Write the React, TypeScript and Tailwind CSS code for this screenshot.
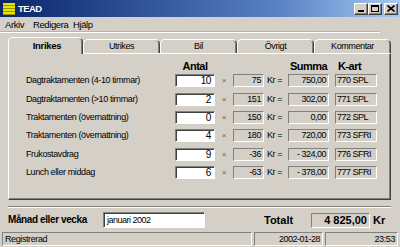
import React from "react";

const rows = [
  { label: "Dagtraktamenten (4-10 timmar)", antal: "10", pris: "75", summa: "750,00", kart: "770 SPL", h: "h-[19px]" },
  { label: "Dagtraktamenten (>10 timmar)", antal: "2", pris: "151", summa: "302,00", kart: "771 SPL", h: "h-[18px]" },
  { label: "Traktamenten (övernattning)", antal: "0", pris: "150", summa: "0,00", kart: "772 SPL", h: "h-[18px]" },
  { label: "Traktamenten (övernattning)", antal: "4", pris: "180", summa: "720,00", kart: "773 SFRI", h: "h-[19px]" },
  { label: "Frukostavdrag", antal: "9", pris: "-36", summa: "- 324,00", kart: "776 SFRI", h: "h-[18px]" },
  { label: "Lunch eller middag", antal: "6", pris: "-63", summa: "- 378,00", kart: "777 SFRI", h: "h-[18px]" },
];

const font = "font-['Liberation_Sans',Arial,sans-serif]";

function WinBtn({ children }: { children: React.ReactNode }) {
  return (
    <div className="w-[14px] h-[12px] bg-[#d4d0c8] border border-t-white border-l-white border-r-[#404040] border-b-[#404040] shadow-[inset_-1px_-1px_0_#808080] flex items-center justify-center">
      {children}
    </div>
  );
}

const sunken = "border border-t-[#808080] border-l-[#808080] border-r-white border-b-white";

export default function App() {
  return (
    <div className={`w-[400px] h-[247px] bg-[#d4d0c8] flex flex-col overflow-hidden text-black ${font} text-[9px] tracking-[-0.4px] leading-none`}>
      {/* Title bar */}
      <div className="h-[17px] shrink-0 flex items-center bg-gradient-to-r from-[#0a246a] via-[#5b82c6] via-70% to-[#a6caf0] pl-[3px] pr-[2px]">
        <svg width="12" height="12" viewBox="0 0 12 12" className="shrink-0">
          <rect x="0" y="0" width="12" height="12" fill="#e8e000" />
          <rect x="0" y="2" width="12" height="1" fill="#9a9400" />
          <rect x="0" y="5" width="12" height="1" fill="#9a9400" />
          <rect x="0" y="8" width="12" height="1" fill="#9a9400" />
          <rect x="0" y="11" width="12" height="1" fill="#9a9400" />
        </svg>
        <span className="ml-[3px] text-white font-bold text-[9.5px] tracking-[-0.6px]">TEAD</span>
        <div className="ml-auto flex items-center">
          <WinBtn>
            <div className="w-[6px] h-[2px] bg-black mt-[5px]" />
          </WinBtn>
          <WinBtn>
            <div className="w-[8px] h-[7px] border border-black border-t-2" />
          </WinBtn>
          <div className="w-[2px]" />
          <WinBtn>
            <svg width="8" height="7" viewBox="0 0 8 7">
              <path d="M0.5 0.5 L7.5 6.5 M7.5 0.5 L0.5 6.5" stroke="black" strokeWidth="1.6" />
            </svg>
          </WinBtn>
        </div>
      </div>

      {/* Menu bar */}
      <div className="h-[13px] shrink-0 flex items-center pl-[5px] text-[9.5px] mt-[1px]">
        <span className="w-[28px]">Arkiv</span>
        <span className="w-[40px]">Redigera</span>
        <span>Hjälp</span>
      </div>
      <div className="h-[2px] shrink-0 mr-[20px] border-t border-t-[#b8b4ac] border-b border-b-white" />

      {/* Tabs */}
      <div className="mt-[3px] flex items-end h-[17px] shrink-0 pl-[8px] relative z-10">
        <div className="w-[75px] h-[17px] mb-[-1px] bg-[#d4d0c8] rounded-t-[5px] border-l border-t border-r border-l-white border-t-white border-r-[#404040] flex items-center justify-center font-bold text-[9.5px] tracking-[-0.3px] shadow-[inset_-1px_0_0_#808080] pl-[3px]">
          Inrikes
        </div>
        {["Utrikes", "Bil", "Övrigt", "Kommentar"].map((t) => (
          <div
            key={t}
            className="w-[77px] h-[14px] bg-[#d4d0c8] rounded-t-[5px] border-l border-t border-r border-l-white border-t-white border-r-[#404040] shadow-[inset_-1px_0_0_#808080] flex items-center justify-center text-[9px]"
          >
            {t}
          </div>
        ))}
      </div>

      {/* Panel */}
      <div className="ml-[8px] w-[383px] h-[147px] shrink-0 border border-t-white border-l-white border-r-[#404040] border-b-[#404040] shadow-[inset_-1px_-1px_0_#808080] flex flex-col pt-[5px]">
        {/* header */}
        <div className="flex items-end h-[13px] pl-[166px] font-bold text-[11px] tracking-[-0.5px]">
          <div className="w-[40px] text-center">Antal</div>
          <div className="w-[18px]" />
          <div className="w-[31px]" />
          <div className="w-[24px]" />
          <div className="w-[41px] text-center">Summa</div>
          <div className="w-[6px]" />
          <div className="w-[42px] pl-[3px]">K-art</div>
        </div>
        <div className="h-[2px]" />
        {rows.map((r, i) => (
          <div key={i} className={`flex items-start ${r.h} pl-[17px]`}>
            <div className="w-[149px] h-[13px] flex items-center">{r.label}</div>
            <div className={`w-[40px] h-[13px] bg-white ${sunken} shadow-[inset_1px_1px_0_#404040] flex items-center justify-end pr-[3px] text-[10px]`}>
              {r.antal}
            </div>
            <div className="w-[18px] h-[13px] flex items-center justify-center text-[#606060] text-[8px]">×</div>
            <div className={`w-[31px] h-[13px] ${sunken} flex items-center justify-end pr-[2px]`}>
              {r.pris}
            </div>
            <div className="w-[24px] h-[13px] flex items-center pl-[3px]">Kr =</div>
            <div className={`w-[41px] h-[13px] ${sunken} flex items-center justify-end pr-[2px] tracking-[-0.5px]`}>
              {r.summa}
            </div>
            <div className="w-[6px]" />
            <div className={`w-[42px] h-[13px] ${sunken} flex items-center pl-[1px] tracking-[-0.5px]`}>
              {r.kart}
            </div>
          </div>
        ))}
      </div>

      {/* separator */}
      <div className="mt-[6px] ml-[8px] w-[383px] h-[2px] shrink-0 border-t border-t-[#808080] border-b border-b-white" />

      {/* bottom row */}
      <div className="mt-[4px] h-[16px] shrink-0 flex items-center pl-[8px]">
        <div className="w-[95px] font-bold text-[10px] tracking-[-0.4px]">Månad eller vecka</div>
        <div className={`w-[102px] h-[16px] bg-white ${sunken} shadow-[inset_1px_1px_0_#404040] flex items-center pl-[3px] tracking-[-0.5px]`}>
          januari 2002
        </div>
        <div className="w-[59px]" />
        <div className="w-[47px] font-bold text-[11px] tracking-normal">Totalt</div>
        <div className={`w-[59px] h-[15px] ${sunken} flex items-center justify-end pr-[2px] font-bold text-[11px] tracking-normal`}>
          4 825,00
        </div>
        <div className="pl-[3px] font-bold text-[11px] tracking-normal">Kr</div>
      </div>

      {/* status bar */}
      <div className="mt-auto h-[15px] shrink-0 flex items-stretch px-[2px] pb-[1px] gap-[2px]">
        <div className={`w-[250px] ${sunken} flex items-center pl-[2px]`}>
          Registrerad
        </div>
        <div className={`w-[69px] ${sunken} flex items-center justify-end pr-[2px] tracking-[-0.5px]`}>
          2002-01-28
        </div>
        <div className={`flex-1 ${sunken} flex items-center justify-end pr-[2px]`}>
          23:53
        </div>
      </div>
    </div>
  );
}
